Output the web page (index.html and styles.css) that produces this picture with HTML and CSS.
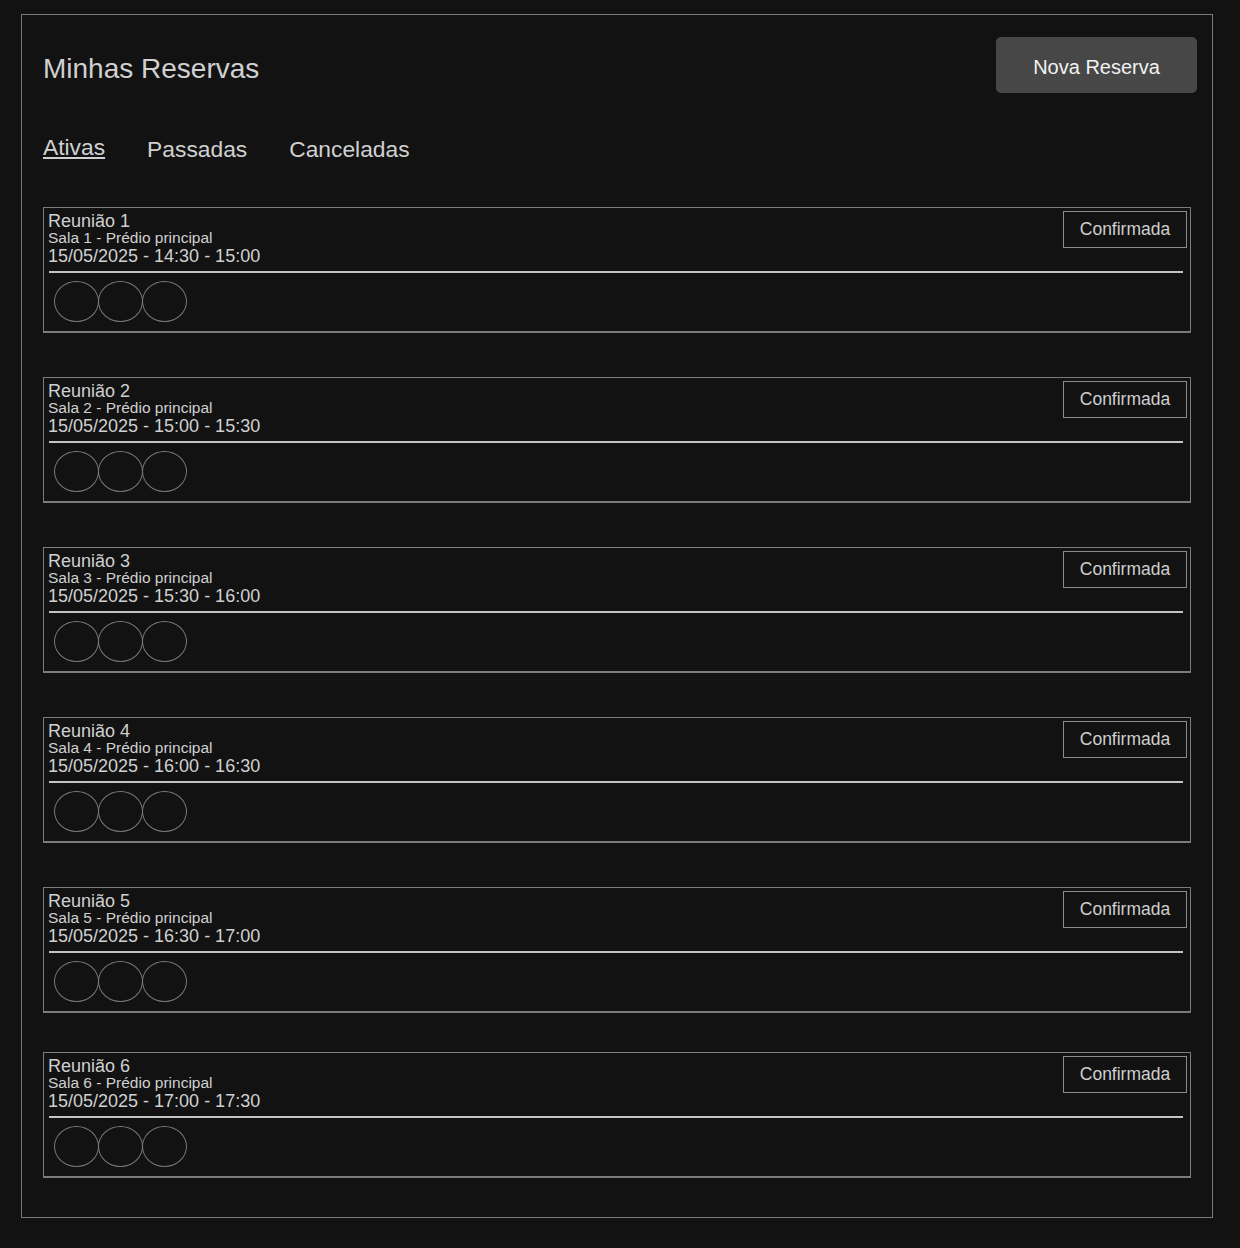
FILE: index.html
```html
<!DOCTYPE html>
<html lang="pt-BR">
<head>
<meta charset="utf-8">
<title>Minhas Reservas</title>
<link rel="stylesheet" href="styles.css">
</head>
<body>
<main class="panel">
  <header class="header">
    <h1 class="title">Minhas Reservas</h1>
    <button class="btn-new">Nova Reserva</button>
  </header>
  <nav class="tabs">
    <a class="tab tab-active">Ativas</a>
    <a class="tab">Passadas</a>
    <a class="tab">Canceladas</a>
  </nav>
  <section class="list">
    <article class="card">
      <div class="card-title">Reunião 1</div>
      <div class="card-room">Sala 1 - Prédio principal</div>
      <div class="card-date">15/05/2025 - 14:30 - 15:00</div>
      <span class="badge">Confirmada</span>
      <div class="sep"></div>
      <div class="avatars"><span class="avatar"></span><span class="avatar"></span><span class="avatar"></span></div>
    </article>
    <article class="card">
      <div class="card-title">Reunião 2</div>
      <div class="card-room">Sala 2 - Prédio principal</div>
      <div class="card-date">15/05/2025 - 15:00 - 15:30</div>
      <span class="badge">Confirmada</span>
      <div class="sep"></div>
      <div class="avatars"><span class="avatar"></span><span class="avatar"></span><span class="avatar"></span></div>
    </article>
    <article class="card">
      <div class="card-title">Reunião 3</div>
      <div class="card-room">Sala 3 - Prédio principal</div>
      <div class="card-date">15/05/2025 - 15:30 - 16:00</div>
      <span class="badge">Confirmada</span>
      <div class="sep"></div>
      <div class="avatars"><span class="avatar"></span><span class="avatar"></span><span class="avatar"></span></div>
    </article>
    <article class="card">
      <div class="card-title">Reunião 4</div>
      <div class="card-room">Sala 4 - Prédio principal</div>
      <div class="card-date">15/05/2025 - 16:00 - 16:30</div>
      <span class="badge">Confirmada</span>
      <div class="sep"></div>
      <div class="avatars"><span class="avatar"></span><span class="avatar"></span><span class="avatar"></span></div>
    </article>
    <article class="card">
      <div class="card-title">Reunião 5</div>
      <div class="card-room">Sala 5 - Prédio principal</div>
      <div class="card-date">15/05/2025 - 16:30 - 17:00</div>
      <span class="badge">Confirmada</span>
      <div class="sep"></div>
      <div class="avatars"><span class="avatar"></span><span class="avatar"></span><span class="avatar"></span></div>
    </article>
    <article class="card card-last">
      <div class="card-title">Reunião 6</div>
      <div class="card-room">Sala 6 - Prédio principal</div>
      <div class="card-date">15/05/2025 - 17:00 - 17:30</div>
      <span class="badge">Confirmada</span>
      <div class="sep"></div>
      <div class="avatars"><span class="avatar"></span><span class="avatar"></span><span class="avatar"></span></div>
    </article>
  </section>
</main>
</body>
</html>
```
FILE: styles.css
```css
* { box-sizing: border-box; }

html, body {
  margin: 0;
  padding: 0;
  background: #121212;
}

body {
  font-family: "Liberation Sans", Arial, sans-serif;
  color: #cfcfcf;
  padding-top: 14px;
  padding-bottom: 30px;
}

.panel {
  margin-left: 21px;
  width: 1192px;
  border: 1px solid #7a7a7a;
  padding: 0 21px 39px 21px;
}

.header {
  display: flex;
  justify-content: space-between;
  align-items: flex-start;
  padding-top: 22px;
  margin-right: -6px;
}

.title {
  margin: 16px 0 0 0;
  font-size: 28px;
  line-height: 32px;
  font-weight: normal;
  color: #d0d0d0;
}

.btn-new {
  width: 201px;
  height: 56px;
  border: none;
  border-radius: 5px;
  background: #474747;
  color: #f2f2f2;
  font-family: "Liberation Sans", Arial, sans-serif;
  font-size: 20px;
  padding: 4px 0 0 0;
}

.tabs {
  display: flex;
  align-items: flex-end;
  gap: 42px;
  margin-top: 41px;
}

.tab {
  font-size: 22.8px;
  line-height: 26px;
  color: #d0d0d0;
}

.tab-active {
  text-decoration: underline;
  text-decoration-thickness: 2px;
  text-underline-offset: 2px;
  margin-bottom: 2px;
}

.list {
  margin-top: 45px;
  display: flex;
  flex-direction: column;
}

.card {
  position: relative;
  border: 1px solid #7c7c7c;
  border-bottom-width: 2px;
  padding: 4px 4px 9px 4px;
}

.card + .card { margin-top: 44px; }
.card.card-last { margin-top: 39px; }

.card-title {
  font-size: 18px;
  line-height: 18px;
  color: #d0d0d0;
}

.card-room {
  font-size: 15.5px;
  line-height: 16px;
  color: #d0d0d0;
}

.card-date {
  font-size: 18px;
  line-height: 20px;
  color: #d0d0d0;
}

.badge {
  position: absolute;
  top: 3px;
  right: 3px;
  width: 124px;
  height: 37px;
  border: 1px solid #8a8a8a;
  font-size: 17.5px;
  line-height: 35px;
  text-align: center;
  color: #cfcfcf;
}

.sep {
  margin: 5px 3px 0 1px;
  height: 2px;
  background: #c4c4c4;
}

.avatars {
  display: flex;
  margin-top: 8px;
  padding-left: 6px;
}

.avatar {
  width: 45px;
  height: 41px;
  border: 1px solid #7a7a7a;
  border-radius: 50%;
}

.avatar + .avatar { margin-left: -1px; }
```
